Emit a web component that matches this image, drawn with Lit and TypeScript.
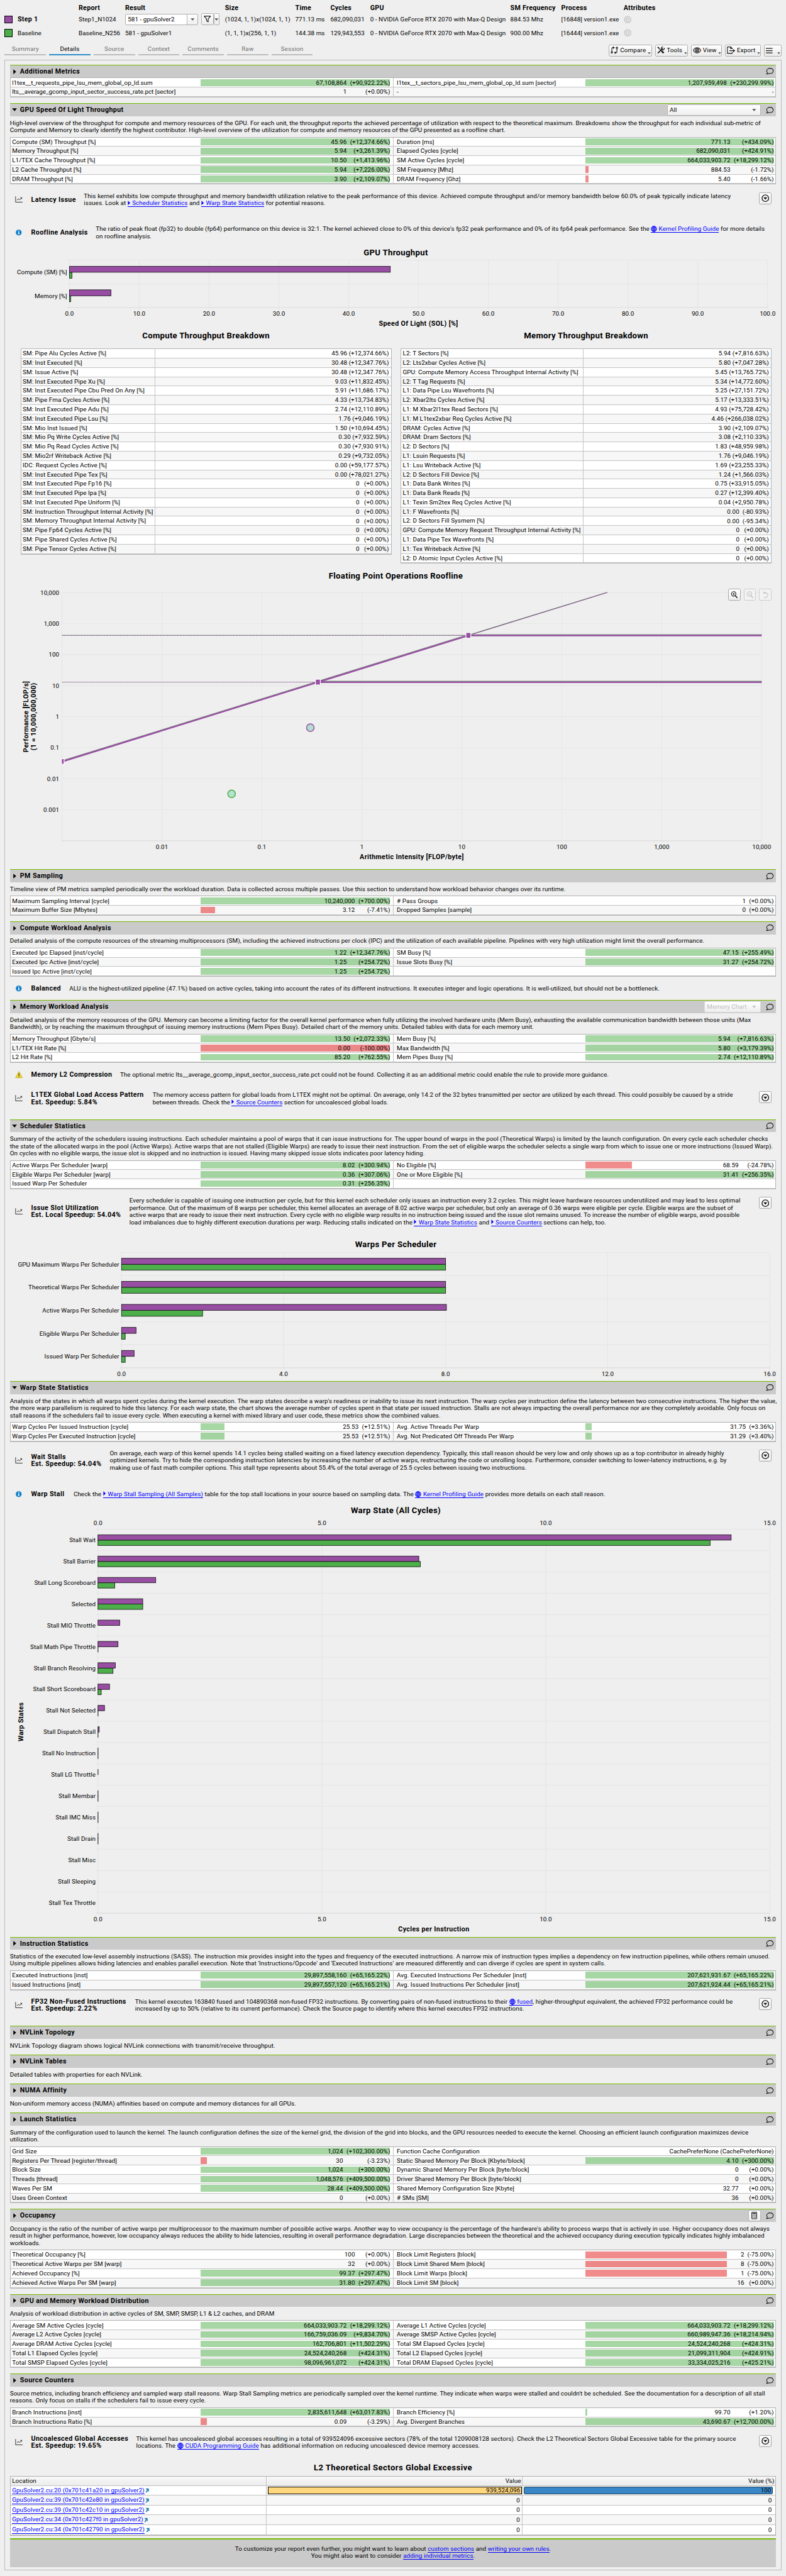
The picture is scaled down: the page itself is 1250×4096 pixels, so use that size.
import { LitElement, html, svg, css, nothing } from "lit";
import type { TemplateResult } from "lit";
import { customElement, property } from "lit/decorators.js";
import { classMap } from "lit/directives/class-map.js";

/** label, value, percentage; an empty label leaves the half of the row blank */
type Metric = [string, string, string];
type Row = [Metric, Metric];
type Line = [number, unknown];

const NONE: Metric = ["", "", ""];

const shared = css`
  * { box-sizing: border-box; }
  svg { display: block; overflow: visible; }
  a { color: #0000ff; text-decoration: none; border-bottom: 1px solid #0000ff; }
  .line { height: 14px; line-height: 14px; white-space: nowrap; text-align: justify; text-align-last: justify; }
`;

/* ---------- icons ---------- */
const tri = html`<svg class="tri" width="6" height="9" viewBox="0 0 6 9" style="display:inline-block"><path d="M0.5 0.3L5 4.5L0.5 8.7Z" fill="currentColor"/></svg>`;
const globe = html`<svg width="12" height="12" viewBox="0 0 12 12" style="display:inline-block;vertical-align:-2px" fill="none" stroke="#0000ff" stroke-width="1.1"><circle cx="6" cy="6" r="5.3"/><ellipse cx="6" cy="6" rx="2.5" ry="5.3"/><path d="M6 .5v11M.7 6h10.6M1.5 3.3h9M1.5 8.7h9"/></svg>`;
const bubble = html`<svg width="15" height="13" viewBox="0 0 15 13" fill="none" stroke="#1a1a1a" stroke-width="1.3" stroke-linejoin="round"><path d="M8 .8C4.3.8 1.6 2.9 1.6 5.8c0 1.3.5 2.4 1.4 3.3-.2 1-.8 1.9-1.8 2.7 1.6.1 3-.4 4-1.2.9.3 1.8.4 2.8.4 3.7 0 6.2-2.2 6.2-5.2S11.7.8 8 .8Z"/></svg>`;
const chartIcon = html`<svg width="15" height="13" viewBox="0 0 15 13" fill="none" stroke="#333" stroke-width="1.2"><path d="M1 .3v11.2h13.5"/><path d="M3.5 7.5l2.8-2.6 2.3 2.3 4-4.2M10 2.7h2.9v2.8"/></svg>`;
const infoIcon = html`<svg width="14" height="14" viewBox="0 0 14 14"><circle cx="7" cy="7" r="6.6" fill="#d4e4ef"/><circle cx="7" cy="7" r="5.5" fill="#0c7cc8"/><path d="M6.2 3h1.8v1.5H6.2zM5.4 5.5H8v3.7h.8v1H5.4v-1h.8V6.5h-.8z" fill="#fff"/></svg>`;
const warnIcon = html`<svg width="15" height="14" viewBox="0 0 15 14"><path d="M7.5.8L14.2 13H.8Z" fill="#f5dd2e" stroke="#b9a11a" stroke-width=".9" stroke-linejoin="round"/><path d="M7.5 4.5v4.5M7.5 10v1.5" stroke="#222" stroke-width="1.5"/></svg>`;
const expandIcon = html`<svg width="15" height="15" viewBox="0 0 15 15"><circle cx="7.5" cy="7.5" r="6.4" fill="none" stroke="#111" stroke-width="1.6"/><path d="M3.8 5.7h7.4L7.5 10.4Z" fill="#111"/></svg>`;
const chip = html`<svg width="15" height="15" viewBox="0 0 15 15" fill="none" stroke="#c4c4c4" stroke-width="1.3"><rect x="2.7" y="2.7" width="9.6" height="9.6" rx="1"/><rect x="5.5" y="5.5" width="4" height="4"/><path d="M5 .3v2.4M7.5.3v2.4M10 .3v2.4M5 12.3v2.4M7.5 12.3v2.4M10 12.3v2.4M.3 5h2.4M.3 7.5h2.4M.3 10h2.4M12.3 5h2.4M12.3 7.5h2.4M12.3 10h2.4"/></svg>`;
const funnel = html`<svg width="14" height="13" viewBox="0 0 14 13" fill="none" stroke="#1a1a1a" stroke-width="1.4" stroke-linejoin="round"><path d="M.8.8h12.4L8.6 6.3v5.5L5.4 9.5V6.3Z"/></svg>`;
const caret = (c = "#555") => html`<svg width="8" height="5" viewBox="0 0 8 5"><path d="M.3.3h7.4L4 4.6Z" fill=${c}/></svg>`;
const compareIcon = html`<svg width="15" height="14" viewBox="0 0 15 14" fill="none" stroke="#1a1a1a" stroke-width="1.4"><path d="M6.8 2H4.5C3 2 2.5 2.8 2.5 4v5.5M4.8.2l2.2 1.8-2.2 1.9"/><circle cx="2.5" cy="11.3" r="1.5"/><path d="M7.8 12h2.3c1.5 0 2.2-.8 2.2-2V4.5M9.9 10.1L7.8 12l2.1 1.8"/><circle cx="12.3" cy="2.6" r="1.5"/></svg>`;
const toolsIcon = html`<svg width="15" height="14" viewBox="0 0 15 14" fill="none" stroke="#1a1a1a"><path d="M3.8 3.8L9 9" stroke-width="1.5"/><path d="M8.8 8.8l4 3.7" stroke-width="3.3"/><path d="M1 .8L4 3.6" stroke-width="2.3"/><path d="M1.3 13L11 3.6" stroke-width="2.2"/><path d="M13.8 2.5a3 3 0 1 1-2.2-1.8" stroke-width="1.5"/></svg>`;
const eyeIcon = html`<svg width="16" height="12" viewBox="0 0 16 12" fill="none" stroke="#1a1a1a" stroke-width="1.3"><path d="M.8 6C2.5 2.7 5 .9 8 .9S13.5 2.7 15.2 6C13.5 9.3 11 11.1 8 11.1S2.5 9.3.8 6Z"/><circle cx="8" cy="6" r="3.4"/><circle cx="8" cy="6" r="1.5"/></svg>`;
const exportIcon = html`<svg width="16" height="14" viewBox="0 0 16 14" fill="none" stroke="#1a1a1a" stroke-width="1.4"><path d="M10.3 5V3.5L7.5.8H1v12.4h9.3V11"/><path d="M7 .8v3h3.3M5 8h9.8M12 5.3L14.9 8 12 10.7"/></svg>`;
const menuIcon = html`<svg width="13" height="11" viewBox="0 0 13 11"><path d="M0 1h13M0 5.5h13M0 10h13" stroke="#1a1a1a" stroke-width="1.5"/></svg>`;
const calcIcon = html`<svg width="11" height="14" viewBox="0 0 11 14"><rect x=".7" y=".7" width="9.6" height="12.6" rx="1" fill="#fff" stroke="#222" stroke-width="1.3"/><path d="M2 3.2h7" stroke="#222" stroke-width="2.2"/><path d="M2.2 6.5h6.8M2.2 8.8h6.8M2.2 11.1h6.8" stroke="#222" stroke-width="1.4" stroke-dasharray="1.5 1.1"/></svg>`;
const openIcon = html`<svg width="8" height="9" viewBox="0 0 8 9" style="display:inline-block;margin-left:2px"><path d="M.5 1H7v6.5L5.4 5.9 2.3 9 .5 8.5 3.4 4.4Z" fill="#2d7fb8"/></svg>`;
const zoomGlyph = (c: string, plus: boolean) => html`<svg width="14" height="14" viewBox="0 0 14 14" fill="none" stroke=${c}><circle cx="5.8" cy="5.3" r="4.3" stroke-width="1.3"/><path d="M3.8 5.3h4${plus ? "M5.8 3.3v4" : ""}" stroke-width="1.2"/><path d="M8.8 8.5l4 4.5" stroke-width="1.9"/></svg>`;
const resetGlyph = html`<svg width="14" height="14" viewBox="0 0 14 14" fill="none" stroke="#c2c2c2" stroke-width="1.4"><path d="M3.5 11.5c4 1.8 7.5-.5 7.5-4.3S7.5 1.7 3.5 3.5M3.3.8v3.5h3.8"/></svg>`;

const link = (text: string) => html`<a>${tri} ${text}</a>`;
const web = (text: string) => html`<a>${globe} ${text}</a>`;

/* ---------- metric table ---------- */
@customElement("metric-table")
class MetricTable extends LitElement {
  @property({ attribute: false }) rows: Row[] = [];
  @property({ attribute: false }) pct: [number, number] = [84, 84];

  static styles = [shared, css`
    :host { display: block; border: 1px solid #b6b6b6; border-top-color: #b0b0b0; background: #fff; }
    .row { display: grid; grid-template-columns: 741px 1fr; height: 18px; border-bottom: 1px solid #c4c4c4; }
    .row:nth-child(even) { background: #f7f7f7; }
    .half { display: grid; grid-template-columns: 368px 366px 1fr; align-items: center; height: 100%; }
    .left { border-right: 1px solid #c4c4c4; }
    .right { grid-template-columns: 370.5px 364.5px 1fr; }
    .name { padding-left: 3px; white-space: nowrap; line-height: 14px; }
    .counter { letter-spacing: -0.03px; }
    .right .name { padding-left: 6px; }
    .track { display: grid; align-items: center; }
    .bar, .nums { grid-area: 1 / 1; }
    .bar { height: 13px; background: rgba(77, 175, 74, 0.5); }
    .neg { background: rgba(228, 26, 28, 0.5); }
    .nums { display: flex; justify-content: flex-end; line-height: 14px; white-space: nowrap; }
    .p { text-align: right; }
  `];

  private half(m: Metric, side: 0 | 1) {
    const [name, value, pct] = m;
    const n = parseFloat(pct.replace(/[(),%]/g, ""));
    const w = isNaN(n) ? 0 : Math.min(100, Math.abs(n));
    return html`<div class=${classMap({ half: true, left: side === 0, right: side === 1 })}>
      <div class=${classMap({ name: true, counter: name.includes("__") })}>${name}</div>
      <div class="track">
        ${w > 0 ? html`<div class=${classMap({ bar: true, neg: n < 0 })} style="width:${w}%"></div>` : nothing}
        <div class="nums"><span>${value}</span>${pct ? html`<span class="p" style="width:${this.pct[side]}px">${pct}</span>` : nothing}</div>
      </div>
    </div>`;
  }

  render() {
    return this.rows.map((r) => html`<div class="row">${this.half(r[0], 0)}${this.half(r[1], 1)}</div>`);
  }
}

/* ---------- section header ---------- */
@customElement("section-bar")
class SectionBar extends LitElement {
  @property() name = "";
  @property({ type: Boolean }) open = false;

  static styles = [shared, css`
    :host { display: flex; align-items: center; height: 25px; border-top: 2px solid #76b900; background: #cacaca; padding: 0 5px 0 6px; }
    .mark { width: 13.5px; }
    .name { font-weight: 700; font-size: 13px; letter-spacing: 0.48px; flex: 1; }
    .extra { display: flex; margin-right: 10px; }
  `];

  render() {
    return html`<div class="mark">${this.open
        ? html`<svg width="10" height="6" viewBox="0 0 10 6" style="margin-left:-2px"><path d="M.3.3h9.4L5 5.7Z"/></svg>`
        : html`<svg width="6" height="10" viewBox="0 0 6 10"><path d="M.3.3v9.4L5.7 5Z"/></svg>`}</div>
      <div class="name">${this.name}</div>
      <div class="extra"><slot></slot></div>${bubble}`;
  }
}

/* ---------- rule result ---------- */
@customElement("rule-note")
class RuleNote extends LitElement {
  @property() kind: "chart" | "info" | "warn" = "chart";
  @property({ attribute: false }) labels: string[] = [];
  @property({ type: Number }) labelWidth = 100;
  @property({ type: Number }) h = 64;
  @property({ attribute: false }) lines: Line[] = [];

  static styles = [shared, css`
    :host { display: block; }
    .note { display: flex; align-items: flex-start; padding: 10px 9px 0 10px; }
    .single { padding-top: 11px; }
    .body { display: flex; align-items: center; flex: 1; }
    .icon { width: 31px; }
    .label { font-weight: 700; font-size: 13px; letter-spacing: 0.47px; line-height: 14px; white-space: nowrap; }
    .btn { width: 24px; height: 23px; display: grid; place-items: center; border: 1px solid #a8a8a8; border-radius: 3px; background: linear-gradient(#fff, #f0f0f0); }
  `];

  render() {
    const icon = this.kind === "chart" ? chartIcon : this.kind === "info" ? infoIcon : warnIcon;
    return html`<div class=${classMap({ note: true, single: this.lines.length === 1 })} style="height:${this.h}px">
      <div class="body">
        <div class="icon">${icon}</div>
        <div class="label" style="width:${this.labelWidth}px">${this.labels.map((l) => html`<div>${l}</div>`)}</div>
        <div>${this.lines.map(([w, t]) => html`<div class="line" style="width:${w}px">${t}</div>`)}</div>
      </div>
      ${this.kind === "chart" ? html`<div class="btn">${expandIcon}</div>` : nothing}
    </div>`;
  }
}

/* ---------- charts ---------- */
interface BarChart {
  y0: number; h: number; title: string; titleY: number;
  left: number; right: number; top: number; bottom: number;
  max: number; ticks: string[]; tickY: number[];
  off: number; bar: number;
  data: [string, number, number][];
  xTitle?: [string, number]; yTitle?: [string, number, number];
}

const PURPLE = "#984ea3";
const GREEN = "#4daf4a";

function barChart(c: BarChart): TemplateResult {
  const step = (c.bottom - c.top) / c.data.length;
  const sx = (v: number) => (v / c.max) * (c.right - c.left);
  const n = c.ticks.length - 1;
  return html`<svg class="chart" width="1482" height=${c.h} viewBox="19 ${c.y0} 1482 ${c.h}">
    <text class="title" x="765" y=${c.titleY + 5.5}>${c.title}</text>
    ${c.ticks.map((t, i) => {
      const x = c.left + ((c.right - c.left) * i) / n;
      return svg`<path d="M${x} ${c.tickY.length > 1 ? c.top - 4 : c.top}V${c.bottom + 4}" stroke="#e3e3e3"/>
        ${c.tickY.map((y) => svg`<text class="mid" x=${x} y=${y + 4.3}>${t}</text>`)}`;
    })}
    ${c.data.map((_, i) => svg`<path d="M${c.left - 4} ${c.top + step * i}H${c.right}" stroke="#e3e3e3"/>`)}
    <path d="M${c.left - 4} ${c.bottom}H${c.right}" stroke="#dcdcdc" stroke-width="1.5"/>
    ${c.data.map(([name, a, b], i) => {
      const y = c.top + step * i;
      return svg`<text class="end" x=${c.left - 4.5} y=${y + step / 2 + 4.3}>${name}</text>
        ${b > 0 ? svg`<rect x=${c.left} y=${y + c.off + c.bar} width=${sx(b)} height=${c.bar} fill=${GREEN} stroke="#111"/>` : nothing}
        ${a > 0 ? svg`<rect x=${c.left} y=${y + c.off} width=${sx(a)} height=${c.bar} fill=${PURPLE} stroke="#111"/>` : nothing}`;
    })}
    ${c.xTitle ? svg`<text class="axis" x=${(c.left + c.right) / 2} y=${c.xTitle[1] + 4.6}>${c.xTitle[0]}</text>` : nothing}
    ${c.yTitle ? svg`<text class="axis" transform="translate(${c.yTitle[1] + 4.5} ${c.yTitle[2]}) rotate(-90)">${c.yTitle[0]}</text>` : nothing}
  </svg>`;
}

function roofline(): TemplateResult {
  const L = 119.5, R = 1472.5, T = 1145, B = 1625;
  const xs = ["", "0.01", "0.1", "1", "10", "100", "1,000", "10,000"];
  const ys = ["10,000", "1,000", "100", "10", "1", "0.1", "0.01", "0.001"];
  return html`<svg class="chart" width="1482" height="580" viewBox="19 1089 1482 580">
    <text class="title" x="765" y="1118.5">Floating Point Operations Roofline</text>
    ${ys.map((t, i) => svg`<path d="M${L} ${T + 60 * i}H${R}" stroke="#e4e4e4"/><text class="end" x="114" y=${T + 60 * i + 4.3}>${t}</text>`)}
    ${xs.map((t, i) => {
      const x = L + ((R - L) * i) / 7;
      return svg`<path d="M${x} ${T}V${B + 4}" stroke="#e4e4e4"/><text class="mid" x=${x} y="1641">${t}</text>`;
    })}
    <path d="M${L} ${B}H${R}" stroke="#dcdcdc" stroke-width="1.5"/>
    <path d="M${L} 1227.4H905" stroke="#6b8f6b" stroke-dasharray="2 1"/>
    <path d="M${L} 1228.2H905M${L} 1318.4H614" stroke="#6f3f78" stroke-width="1.1" stroke-dasharray="2 1"/>
    <path d="M905 1227.8L1174 1144.6" stroke="#5d9a5b" stroke-width="1.5"/>
    <path d="M905 1228.3L1174 1145.2" stroke=${PURPLE} stroke-width="1.2"/>
    <path d="M${L} 1471L905 1227H${R}M614 1317.2H${R}" fill="none" stroke="#7fa97f" stroke-width="2.6"/>
    <path d="M${L} 1472L905 1228.2H${R}M614 1318.5H${R}" fill="none" stroke=${PURPLE} stroke-width="3"/>
    <rect x="900.5" y="1222.5" width="9.5" height="11" fill=${PURPLE} stroke="#fff" stroke-width="1.5"/>
    <rect x="609.5" y="1312.8" width="9.5" height="11" fill=${PURPLE} stroke="#fff" stroke-width="1.5"/>
    <path d="M119.5 1466.5h4v10.5h-4" fill=${PURPLE} stroke="#fff" stroke-width="1.5"/>
    <circle cx="599.7" cy="1406.4" r="7.3" fill="#b3dfd0" stroke=${PURPLE} stroke-width="1.8"/>
    <circle cx="447.4" cy="1534.4" r="7.3" fill="#b3e2cd" stroke=${GREEN} stroke-width="1.8"/>
    <text class="axis" x="796" y="1660.6">Arithmetic Intensity [FLOP/byte]</text>
    <text class="axis" transform="translate(54.5 1385) rotate(-90)">Performance [FLOP/s]</text>
    <text class="axis" transform="translate(68.5 1385) rotate(-90)">(1 = 10,000,000,000)</text>
  </svg>`;
}

/* ---------- data ---------- */
const sm: [string, string][] = [
  ["SM: Pipe Alu Cycles Active [%]", "45.96 (+12,374.66%)"], ["SM: Inst Executed [%]", "30.48 (+12,347.76%)"],
  ["SM: Issue Active [%]", "30.48 (+12,347.76%)"], ["SM: Inst Executed Pipe Xu [%]", "9.03 (+11,832.45%)"],
  ["SM: Inst Executed Pipe Cbu Pred On Any [%]", "5.91 (+11,686.17%)"], ["SM: Pipe Fma Cycles Active [%]", "4.33 (+13,734.83%)"],
  ["SM: Inst Executed Pipe Adu [%]", "2.74 (+12,110.89%)"], ["SM: Inst Executed Pipe Lsu [%]", "1.76 (+9,046.19%)"],
  ["SM: Mio Inst Issued [%]", "1.50 (+10,694.45%)"], ["SM: Mio Pq Write Cycles Active [%]", "0.30 (+7,932.59%)"],
  ["SM: Mio Pq Read Cycles Active [%]", "0.30 (+7,930.91%)"], ["SM: Mio2rf Writeback Active [%]", "0.29 (+9,732.05%)"],
  ["IDC: Request Cycles Active [%]", "0.00 (+59,177.57%)"], ["SM: Inst Executed Pipe Tex [%]", "0.00 (+78,021.27%)"],
  ["SM: Inst Executed Pipe Fp16 [%]", "0\u00a0\u00a0 (+0.00%)"], ["SM: Inst Executed Pipe Ipa [%]", "0\u00a0\u00a0 (+0.00%)"],
  ["SM: Inst Executed Pipe Uniform [%]", "0\u00a0\u00a0 (+0.00%)"], ["SM: Instruction Throughput Internal Activity [%]", "0\u00a0\u00a0 (+0.00%)"],
  ["SM: Memory Throughput Internal Activity [%]", "0\u00a0\u00a0 (+0.00%)"], ["SM: Pipe Fp64 Cycles Active [%]", "0\u00a0\u00a0 (+0.00%)"],
  ["SM: Pipe Shared Cycles Active [%]", "0\u00a0\u00a0 (+0.00%)"], ["SM: Pipe Tensor Cycles Active [%]", "0\u00a0\u00a0 (+0.00%)"],
];
const mem: [string, string][] = [
  ["L2: T Sectors [%]", "5.94 (+7,816.63%)"], ["L2: Lts2xbar Cycles Active [%]", "5.80 (+7,047.28%)"],
  ["GPU: Compute Memory Access Throughput Internal Activity [%]", "5.45 (+13,765.72%)"], ["L2: T Tag Requests [%]", "5.34 (+14,772.60%)"],
  ["L1: Data Pipe Lsu Wavefronts [%]", "5.25 (+27,151.72%)"], ["L2: Xbar2lts Cycles Active [%]", "5.17 (+13,333.51%)"],
  ["L1: M Xbar2l1tex Read Sectors [%]", "4.93 (+75,728.42%)"], ["L1: M L1tex2xbar Req Cycles Active [%]", "4.46 (+266,038.02%)"],
  ["DRAM: Cycles Active [%]", "3.90 (+2,109.07%)"], ["DRAM: Dram Sectors [%]", "3.08 (+2,110.33%)"],
  ["L2: D Sectors [%]", "1.83 (+48,959.98%)"], ["L1: Lsuin Requests [%]", "1.76 (+9,046.19%)"],
  ["L1: Lsu Writeback Active [%]", "1.69 (+23,255.33%)"], ["L2: D Sectors Fill Device [%]", "1.24 (+1,566.03%)"],
  ["L1: Data Bank Writes [%]", "0.75 (+33,915.05%)"], ["L1: Data Bank Reads [%]", "0.27 (+12,399.40%)"],
  ["L1: Texin Sm2tex Req Cycles Active [%]", "0.04 (+2,950.78%)"], ["L1: F Wavefronts [%]", "0.00\u00a0 (-80.93%)"],
  ["L2: D Sectors Fill Sysmem [%]", "0.00\u00a0 (-95.34%)"], ["GPU: Compute Memory Request Throughput Internal Activity [%]", "0\u00a0\u00a0 (+0.00%)"],
  ["L1: Data Pipe Tex Wavefronts [%]", "0\u00a0\u00a0 (+0.00%)"], ["L1: Tex Writeback Active [%]", "0\u00a0\u00a0 (+0.00%)"],
  ["L2: D Atomic Input Cycles Active [%]", "0\u00a0\u00a0 (+0.00%)"],
];

const sources = ["20 (0x701c41a20", "39 (0x701c42e80", "39 (0x701c42c10", "34 (0x701c427f0", "34 (0x701c42790"];

const desc = (lines: Line[], tail = true) => html`<div class=${classMap({ desc: true, tail })}>
  ${lines.map(([w, t]) => html`<div class="line" style="width:${w}px">${t}</div>`)}</div>`;

const breakdown = (title: string, cls: string, rows: [string, string][]) => html`<div class="bd ${cls}">
  <h4>${title}</h4>
  <div class="bdt">${rows.map(([a, b]) => html`<div class="bdr"><span class="bdn">${a}</span><span class="bdv">${b}</span></div>`)}</div>
</div>`;

@customElement("app-root")
class AppRoot extends LitElement {
  static styles = [shared, css`
    :host { display: block; width: 1250px; height: 4096px; overflow: hidden; background: #efefef; }
    .page { zoom: 0.82237; width: 1520px; height: 4981px; font: 12px/14px Roboto, "Liberation Sans", sans-serif; letter-spacing: 0.07px; color: #000; padding: 7px 9px 0; background: #efefef; }
    .top { display: grid; grid-template-columns: 25px 118px 90px 193px 136px 68px 77px 271px 98.5px 120.5px 1fr; grid-template-rows: 18px 25px 28px; align-items: center; white-space: nowrap; height: 71px; }
    .top b { font-weight: 700; font-size: 13px; letter-spacing: 0.35px; }
    .sw { width: 15px; height: 15px; border: 1px solid #000; }
    .p { background: #984ea3; } .g { background: #4daf4a; }
    .result { display: flex; align-items: center; }
    .sel { display: flex; align-items: center; width: 141px; height: 22px; border: 1px solid #adadad; border-radius: 2px; background: #fff; padding-left: 4px; }
    .sel span { flex: 1; }
    .sel i { display: grid; place-items: center; width: 20px; height: 100%; border-left: 1px solid #b4b4b4; background: linear-gradient(#fff, #eee); }
    .fb { display: grid; place-items: center; height: 23px; border: 1px solid #adadad; border-radius: 3px; background: linear-gradient(#fff, #ebebeb); }
    .f1 { width: 24px; margin-left: 6px; } .f2 { width: 12px; }
    .bar { display: flex; justify-content: space-between; height: 37px; }
    .tabs { display: flex; gap: 6px; padding-top: 9px; }
    .tab { width: 80px; height: 20px; text-align: center; color: #6f6f6f; border-bottom: 3px solid #bdbdbd; letter-spacing: 0.18px; }
    .on { color: #000; border-color: #2d8dc8; }
    .tools { display: flex; gap: 6px; padding-top: 8px; }
    .tb { display: flex; align-items: center; gap: 3px; height: 23px; padding-left: 3px; border: 1px solid #adadad; border-radius: 3px; background: linear-gradient(#fff, #ebebeb); letter-spacing: 0.16px; }
    .tb span { flex: 1; }
    .tb i { align-self: flex-end; padding: 0 1px 3px 0; }
    .tb i svg { width: 6px; height: 4px; }
    .panel { border: 1px solid #b8b8b8; height: 4855px; padding: 9px 9px 0; }
    section { margin-bottom: 11px; }
    section.flush { margin-bottom: 0; }
    .desc { padding-top: 6px; }
    .tail { padding-bottom: 6px; }
    .rules { padding-top: 5px; }
    .chart text { font: 12px Roboto, sans-serif; fill: #000; }
    .chart .mid, .chart .title, .chart .axis { text-anchor: middle; }
    .chart .end { text-anchor: end; }
    .chart .title { font-weight: 700; font-size: 16px; letter-spacing: 0.38px; }
    .chart .axis { font-weight: 700; font-size: 13px; letter-spacing: 0.45px; }
    .bds { display: flex; gap: 17.5px; padding: 0 9.5px 0 20.5px; }
    h4 { margin: 0; font-size: 16px; line-height: 18px; font-weight: 700; letter-spacing: 0.34px; text-align: center; height: 33px; }
    .bd { width: 717.5px; flex: none; }
    .bdt { border: 1px solid #b6b6b6; background: #fff; }
    .bdr { display: flex; height: 18px; align-items: center; border-bottom: 1px solid #c4c4c4; white-space: nowrap; }
    .bdr:nth-child(even) { background: #f7f7f7; }
    .bdn { width: 260px; height: 100%; padding-left: 3px; border-right: 1px solid #c4c4c4; line-height: 17px; }
    .memory .bdn { width: 352.5px; }
    .bdv { flex: 1; text-align: right; padding-right: 4px; }
    .roof { display: grid; }
    .roof > * { grid-area: 1 / 1; }
    .zooms { display: flex; gap: 6px; justify-self: end; padding: 48px 9px 0 0; height: 71px; }
    .zb { width: 24px; height: 23px; display: grid; place-items: center; border: 1px solid #a8a8a8; border-radius: 3px; background: linear-gradient(#fff, #ededed); }
    .off { border-color: #cdcdcd; background: #f2f2f2; }
    .combo { display: flex; align-items: center; justify-content: space-between; height: 21px; width: 181px; padding: 0 7px 0 4px; border: 1px solid #b4b4b4; border-radius: 2px; background: linear-gradient(#fff, #eee); }
    .dis { width: 109px; color: #bdbdbd; border-color: #d8d8d8; }
    .calc { width: 24px; height: 22px; display: grid; place-items: center; border: 1px solid #b4b4b4; border-radius: 3px; background: linear-gradient(#fff, #eee); }
    .l2 { height: 25px; text-align: center; font-weight: 700; font-size: 16px; letter-spacing: 0.5px; line-height: 19px; }
    .lt { border: 1px solid #b0b0b0; background: #fff; margin-bottom: 5px; }
    .lr { display: grid; grid-template-columns: 494px 495px 1fr; height: 19px; border-bottom: 1px solid #c4c4c4; white-space: nowrap; }
    .lr > div { display: flex; align-items: center; padding: 0 4px 0 3px; }
    .lr > div + div { border-left: 1px solid #c4c4c4; justify-content: flex-end; }
    .lr > div:last-child { padding-right: 7px; }
    .lr:nth-child(odd) { background: #f7f7f7; }
    .lr.head { height: 18px; background: linear-gradient(#f8f8f8, #ececec); }
    .lr.head > div { padding-right: 2px; }
    .lr .hot { padding: 2px 0 1.5px 2px; }
    .lr .hot:last-child { padding-right: 5px; }
    .fill { flex: 1; height: 14.5px; border: 1px solid #000; background: #ffd77f; text-align: right; line-height: 13px; padding-right: 2px; }
    .blue { background: #3a87c8; border-color: #24405a; border-radius: 2px; }
    footer { height: 56px; border-top: 3px solid #76b900; background: #cacaca; padding-top: 11px; display: flex; flex-direction: column; align-items: center; }
  `];

  render() {
    return html`<div class="page">
      <div class="top">
        <span></span><span></span><b>Report</b><b>Result</b><b>Size</b><b>Time</b><b>Cycles</b><b>GPU</b><b>SM Frequency</b><b>Process</b><b>Attributes</b>
        <div class="sw p"></div><b>Step 1</b><span>Step1_N1024</span>
        <div class="result"><div class="sel"><span>581 - gpuSolver2</span><i>${caret()}</i></div><div class="fb f1">${funnel}</div><div class="fb f2">${caret()}</div></div>
        <span>(1024, 1, 1)x(1024, 1, 1)</span><span>771.13 ms</span><span>682,090,031</span><span>0 - NVIDIA GeForce RTX 2070 with Max-Q Design</span><span>884.53 Mhz</span><span>[16848] version1.exe</span><span>${chip}</span>
        <div class="sw g"></div><span>Baseline</span><span>Baseline_N256</span><span>581 - gpuSolver1</span>
        <span>(1, 1, 1)x(256, 1, 1)</span><span>144.38 ms</span><span>129,943,553</span><span>0 - NVIDIA GeForce RTX 2070 with Max-Q Design</span><span>900.00 Mhz</span><span>[16444] version1.exe</span><span>${chip}</span>
      </div>
      <div class="bar">
        <div class="tabs">${["Summary", "Details", "Source", "Context", "Comments", "Raw", "Session"].map((t) => html`<div class=${classMap({ tab: true, on: t === "Details" })}>${t}</div>`)}</div>
        <div class="tools">
          <div class="tb" style="width:84px">${compareIcon}<span>Compare</span><i>${caret()}</i></div>
          <div class="tb" style="width:63px">${toolsIcon}<span>Tools</span><i>${caret()}</i></div>
          <div class="tb" style="width:60px">${eyeIcon}<span>View</span><i>${caret()}</i></div>
          <div class="tb" style="width:69px">${exportIcon}<span>Export</span><i>${caret()}</i></div>
          <div class="tb" style="width:34px">${menuIcon}<span></span><i>${caret()}</i></div>
        </div>
      </div>
      <div class="panel">${this.sections()}</div>
    </div>`;
  }

  private sections() {
    return html`
      <section><section-bar name="Additional Metrics"></section-bar>
        <metric-table .pct=${[84, 91]} .rows=${[
          [["l1tex__t_requests_pipe_lsu_mem_global_op_ld.sum", "67,108,864", "(+90,922.22%)"], ["l1tex__t_sectors_pipe_lsu_mem_global_op_ld.sum [sector]", "1,207,959,498", "(+230,299.99%)"]],
          [["lts__average_gcomp_input_sector_success_rate.pct [sector]", "1", "(+0.00%)"], ["-", "-", ""]],
        ]}></metric-table></section>

      <section><section-bar name="GPU Speed Of Light Throughput" open><div class="combo">All${caret()}</div></section-bar>
        ${desc([[1452, "High-level overview of the throughput for compute and memory resources of the GPU. For each unit, the throughput reports the achieved percentage of utilization with respect to the theoretical maximum. Breakdowns show the throughput for each individual sub-metric of"],
          [958, "Compute and Memory to clearly identify the highest contributor. High-level overview of the utilization for compute and memory resources of the GPU presented as a roofline chart."]])}
        <metric-table .rows=${[
          [["Compute (SM) Throughput [%]", "45.96", "(+12,374.66%)"], ["Duration [ms]", "771.13", "(+434.09%)"]],
          [["Memory Throughput [%]", "5.94", "(+3,261.39%)"], ["Elapsed Cycles [cycle]", "682,090,031", "(+424.91%)"]],
          [["L1/TEX Cache Throughput [%]", "10.50", "(+1,413.96%)"], ["SM Active Cycles [cycle]", "664,033,903.72", "(+18,299.12%)"]],
          [["L2 Cache Throughput [%]", "5.94", "(+7,226.00%)"], ["SM Frequency [Mhz]", "884.53", "(-1.72%)"]],
          [["DRAM Throughput [%]", "3.90", "(+2,109.07%)"], ["DRAM Frequency [Ghz]", "5.40", "(-1.66%)"]],
        ]}></metric-table>
        <div class="rules">
          <rule-note .labels=${["Latency Issue"]} labelWidth="102" h="64" .lines=${[
            [1251, "This kernel exhibits low compute throughput and memory bandwidth utilization relative to the peak performance of this device. Achieved compute throughput and/or memory bandwidth below 60.0% of peak typically indicate latency"],
            [465, html`issues. Look at ${link("Scheduler Statistics")} and ${link("Warp State Statistics")} for potential reasons.`]]}></rule-note>
          <rule-note kind="info" .labels=${["Roofline Analysis"]} labelWidth="125" h="54" .lines=${[
            [1290, html`The ratio of peak float (fp32) to double (fp64) performance on this device is 32:1. The kernel achieved close to 0% of this device's fp32 peak performance and 0% of its fp64 peak performance. See the ${web("Kernel Profiling Guide")} for more details`],
            [108, "on roofline analysis."]]}></rule-note>
        </div>
        ${barChart({ y0: 479, h: 161, title: "GPU Throughput", titleY: 486.5, left: 133.8, right: 1484, top: 502, bottom: 593, max: 100,
          ticks: ["0.0", "10.0", "20.0", "30.0", "40.0", "50.0", "60.0", "70.0", "80.0", "90.0", "100.0"], tickY: [604.6], off: 11.6, bar: 11.5,
          data: [["Compute (SM) [%]", 45.96, 0.37], ["Memory [%]", 5.94, 0.18]], xTitle: ["Speed Of Light (SOL) [%]", 624] })}
        <div class="bds">${breakdown("Compute Throughput Breakdown", "compute", sm)}${breakdown("Memory Throughput Breakdown", "memory", mem)}</div>
        <div class="roof">${roofline()}<div class="zooms"><div class="zb">${zoomGlyph("#1a1a1a", true)}</div><div class="zb off">${zoomGlyph("#c2c2c2", false)}</div><div class="zb off">${resetGlyph}</div></div></div>
      </section>

      <section><section-bar name="PM Sampling"></section-bar>
        ${desc([[1073, "Timeline view of PM metrics sampled periodically over the workload duration. Data is collected across multiple passes. Use this section to understand how workload behavior changes over its runtime."]])}
        <metric-table .pct=${[68, 54]} .rows=${[
          [["Maximum Sampling Interval [cycle]", "10,240,000", "(+700.00%)"], ["# Pass Groups", "1", "(+0.00%)"]],
          [["Maximum Buffer Size [Mbytes]", "3.12", "(-7.41%)"], ["Dropped Samples [sample]", "0", "(+0.00%)"]],
        ]}></metric-table></section>

      <section class="flush"><section-bar name="Compute Workload Analysis"></section-bar>
        ${desc([[1343, "Detailed analysis of the compute resources of the streaming multiprocessors (SM), including the achieved instructions per clock (IPC) and the utilization of each available pipeline. Pipelines with very high utilization might limit the overall performance."]])}
        <metric-table .pct=${[84, 68]} .rows=${[
          [["Executed Ipc Elapsed [inst/cycle]", "1.22", "(+12,347.76%)"], ["SM Busy [%]", "47.15", "(+255.49%)"]],
          [["Executed Ipc Active [inst/cycle]", "1.25", "(+254.72%)"], ["Issue Slots Busy [%]", "31.27", "(+254.72%)"]],
          [["Issued Ipc Active [inst/cycle]", "1.25", "(+254.72%)"], NONE],
        ]}></metric-table>
        <div class="rules"><rule-note kind="info" .labels=${["Balanced"]} labelWidth="74" h="40" .lines=${[
          [1136, "ALU is the highest-utilized pipeline (47.1%) based on active cycles, taking into account the rates of its different instructions. It executes integer and logic operations. It is well-utilized, but should not be a bottleneck."]]}></rule-note></div></section>

      <section class="flush"><section-bar name="Memory Workload Analysis"><div class="combo dis">Memory Chart${caret("#bdbdbd")}</div></section-bar>
        ${desc([[1433, "Detailed analysis of the memory resources of the GPU. Memory can become a limiting factor for the overall kernel performance when fully utilizing the involved hardware units (Mem Busy), exhausting the available communication bandwidth between those units (Max"],
          [1013, "Bandwidth), or by reaching the maximum throughput of issuing memory instructions (Mem Pipes Busy). Detailed chart of the memory units. Detailed tables with data for each memory unit."]])}
        <metric-table .pct=${[77, 84]} .rows=${[
          [["Memory Throughput [Gbyte/s]", "13.50", "(+2,072.33%)"], ["Mem Busy [%]", "5.94", "(+7,816.63%)"]],
          [["L1/TEX Hit Rate [%]", "0.00", "(-100.00%)"], ["Max Bandwidth [%]", "5.80", "(+3,179.39%)"]],
          [["L2 Hit Rate [%]", "85.20", "(+762.55%)"], ["Mem Pipes Busy [%]", "2.74", "(+12,110.89%)"]],
        ]}></metric-table>
        <div class="rules">
          <rule-note kind="warn" .labels=${["Memory L2 Compression"]} labelWidth="172" h="40" .lines=${[
            [943, "The optional metric lts__average_gcomp_input_sector_success_rate.pct could not be found. Collecting it as an additional metric could enable the rule to provide more guidance."]]}></rule-note>
          <rule-note .labels=${["L1TEX Global Load Access Pattern", "Est. Speedup: 5.84%"]} labelWidth="235" h="64" .lines=${[
            [1122, "The memory access pattern for global loads from L1TEX might not be optimal. On average, only 14.2 of the 32 bytes transmitted per sector are utilized by each thread. This could possibly be caused by a stride"],
            [453, html`between threads. Check the ${link("Source Counters")} section for uncoalesced global loads.`]]}></rule-note>
        </div></section>

      <section class="flush"><section-bar name="Scheduler Statistics" open></section-bar>
        ${desc([[1466, "Summary of the activity of the schedulers issuing instructions. Each scheduler maintains a pool of warps that it can issue instructions for. The upper bound of warps in the pool (Theoretical Warps) is limited by the launch configuration. On every cycle each scheduler checks"],
          [1471, "the state of the allocated warps in the pool (Active Warps). Active warps that are not stalled (Eligible Warps) are ready to issue their next instruction. From the set of eligible warps the scheduler selects a single warp from which to issue one or more instructions (Issued Warp)."],
          [802, "On cycles with no eligible warps, the issue slot is skipped and no instruction is issued. Having many skipped issue slots indicates poor latency hiding."]])}
        <metric-table .pct=${[68, 68]} .rows=${[
          [["Active Warps Per Scheduler [warp]", "8.02", "(+300.94%)"], ["No Eligible [%]", "68.59", "(-24.78%)"]],
          [["Eligible Warps Per Scheduler [warp]", "0.36", "(+307.06%)"], ["One or More Eligible [%]", "31.41", "(+256.35%)"]],
          [["Issued Warp Per Scheduler", "0.31", "(+256.35%)"], NONE],
        ]}></metric-table>
        <div class="rules"><rule-note .labels=${["Issue Slot Utilization", "Est. Local Speedup: 54.04%"]} labelWidth="190" h="92" .lines=${[
          [1180, "Every scheduler is capable of issuing one instruction per cycle, but for this kernel each scheduler only issues an instruction every 3.2 cycles. This might leave hardware resources underutilized and may lead to less optimal"],
          [1164, "performance. Out of the maximum of 8 warps per scheduler, this kernel allocates an average of 8.02 active warps per scheduler, but only an average of 0.36 warps were eligible per cycle. Eligible warps are the subset of"],
          [1180, "active warps that are ready to issue their next instruction. Every cycle with no eligible warp results in no instruction being issued and the issue slot remains unused. To increase the number of eligible warps, avoid possible"],
          [922, html`load imbalances due to highly different execution durations per warp. Reducing stalls indicated on the ${link("Warp State Statistics")} and ${link("Source Counters")} sections can help, too.`]]}></rule-note></div>
        ${barChart({ y0: 2394, h: 274, title: "Warps Per Scheduler", titleY: 2403.5, left: 234.6, right: 1488, top: 2419.3, bottom: 2642, max: 16,
          ticks: ["0.0", "4.0", "8.0", "12.0", "16.0"], tickY: [2653.7], off: 10.9, bar: 11.5,
          data: [["GPU Maximum Warps Per Scheduler", 8, 8], ["Theoretical Warps Per Scheduler", 8, 8], ["Active Warps Per Scheduler", 8.02, 2], ["Eligible Warps Per Scheduler", 0.36, 0.09], ["Issued Warp Per Scheduler", 0.31, 0.09]] })}
      </section>

      <section class="flush"><section-bar name="Warp State Statistics" open></section-bar>
        ${desc([[1477, "Analysis of the states in which all warps spent cycles during the kernel execution. The warp states describe a warp's readiness or inability to issue its next instruction. The warp cycles per instruction define the latency between two consecutive instructions. The higher the value,"],
          [1461, "the more warp parallelism is required to hide this latency. For each warp state, the chart shows the average number of cycles spent in that state per issued instruction. Stalls are not always impacting the overall performance nor are they completely avoidable. Only focus on"],
          [828, "stall reasons if the schedulers fail to issue every cycle. When executing a kernel with mixed library and user code, these metrics show the combined values."]])}
        <metric-table .pct=${[61, 54]} .rows=${[
          [["Warp Cycles Per Issued Instruction [cycle]", "25.53", "(+12.51%)"], ["Avg. Active Threads Per Warp", "31.75", "(+3.36%)"]],
          [["Warp Cycles Per Executed Instruction [cycle]", "25.53", "(+12.51%)"], ["Avg. Not Predicated Off Threads Per Warp", "31.29", "(+3.40%)"]],
        ]}></metric-table>
        <div class="rules">
          <rule-note .labels=${["Wait Stalls", "Est. Speedup: 54.04%"]} labelWidth="152" h="78" .lines=${[
            [1188, "On average, each warp of this kernel spends 14.1 cycles being stalled waiting on a fixed latency execution dependency. Typically, this stall reason should be very low and only shows up as a top contributor in already highly"],
            [1190, "optimized kernels. Try to hide the corresponding instruction latencies by increasing the number of active warps, restructuring the code or unrolling loops. Furthermore, consider switching to lower-latency instructions, e.g. by"],
            [806, "making use of fast math compiler options. This stall type represents about 55.4% of the total average of 25.5 cycles between issuing two instructions."]]}></rule-note>
          <rule-note kind="info" .labels=${["Warp Stall"]} labelWidth="82" h="40" .lines=${[
            [1028, html`Check the ${link("Warp Stall Sampling (All Samples)")} table for the top stall locations in your source based on sampling data. The ${web("Kernel Profiling Guide")} provides more details on each stall reason.`]]}></rule-note>
        </div>
        ${barChart({ y0: 2908, h: 834, title: "Warp State (All Cycles)", titleY: 2917.5, left: 189, right: 1488, top: 2953.7, bottom: 3696, max: 15,
          ticks: ["0.0", "5.0", "10.0", "15.0"], tickY: [2941.7, 3707.8], off: 10.7, bar: 10.3,
          data: [["Stall Wait", 14.14, 13.67], ["Stall Barrier", 7.165, 7.2], ["Stall Long Scoreboard", 1.29, 0.375], ["Selected", 1, 1], ["Stall MIO Throttle", 0.487, 0],
            ["Stall Math Pipe Throttle", 0.448, 0.002], ["Stall Branch Resolving", 0.387, 0.336], ["Stall Short Scoreboard", 0.258, 0.073], ["Stall Not Selected", 0.146, 0.002],
            ["Stall Dispatch Stall", 0.028, 0.002], ["Stall No Instruction", 0.002, 0.002], ["Stall LG Throttle", 0.002, 0], ["Stall Membar", 0.002, 0.002], ["Stall IMC Miss", 0.002, 0.002],
            ["Stall Drain", 0.002, 0.002], ["Stall Misc", 0, 0], ["Stall Sleeping", 0, 0], ["Stall Tex Throttle", 0, 0]],
          xTitle: ["Cycles per Instruction", 3727], yTitle: ["Warp States", 40.5, 3326] })}
      </section>

      <section class="flush"><section-bar name="Instruction Statistics"></section-bar>
        ${desc([[1466, "Statistics of the executed low-level assembly instructions (SASS). The instruction mix provides insight into the types and frequency of the executed instructions. A narrow mix of instruction types implies a dependency on few instruction pipelines, while others remain unused."],
          [1151, "Using multiple pipelines allows hiding latencies and enables parallel execution. Note that 'Instructions/Opcode' and 'Executed Instructions' are measured differently and can diverge if cycles are spent in system calls."]])}
        <metric-table .rows=${[
          [["Executed Instructions [inst]", "29,897,558,160", "(+65,165.22%)"], ["Avg. Executed Instructions Per Scheduler [inst]", "207,621,931.67", "(+65,165.22%)"]],
          [["Issued Instructions [inst]", "29,897,557,120", "(+65,165.21%)"], ["Avg. Issued Instructions Per Scheduler [inst]", "207,621,924.44", "(+65,165.21%)"]],
        ]}></metric-table>
        <div class="rules"><rule-note .labels=${["FP32 Non-Fused Instructions", "Est. Speedup: 2.22%"]} labelWidth="201" h="64" .lines=${[
          [1156, html`This kernel executes 163840 fused and 104890368 non-fused FP32 instructions. By converting pairs of non-fused instructions to their ${web("fused")}, higher-throughput equivalent, the achieved FP32 performance could be`],
          [749, "increased by up to 50% (relative to its current performance). Check the Source page to identify where this kernel executes FP32 instructions."]]}></rule-note></div></section>

      <section><section-bar name="NVLink Topology"></section-bar>${desc([[513, "NVLink Topology diagram shows logical NVLink connections with transmit/receive throughput."]], false)}</section>
      <section><section-bar name="NVLink Tables"></section-bar>${desc([[255, "Detailed tables with properties for each NVLink."]], false)}</section>
      <section><section-bar name="NUMA Affinity"></section-bar>${desc([[553, "Non-uniform memory access (NUMA) affinities based on compute and memory distances for all GPUs."]], false)}</section>

      <section><section-bar name="Launch Statistics"></section-bar>
        ${desc([[1427, "Summary of the configuration used to launch the kernel. The launch configuration defines the size of the kernel grid, the division of the grid into blocks, and the GPU resources needed to execute the kernel. Choosing an efficient launch configuration maximizes device"], [55, "utilization."]])}
        <metric-table .pct=${[91, 68]} .rows=${[
          [["Grid Size", "1,024", "(+102,300.00%)"], ["Function Cache Configuration", "CachePreferNone (CachePreferNone)", ""]],
          [["Registers Per Thread [register/thread]", "30", "(-3.23%)"], ["Static Shared Memory Per Block [Kbyte/block]", "4.10", "(+300.00%)"]],
          [["Block Size", "1,024", "(+300.00%)"], ["Dynamic Shared Memory Per Block [byte/block]", "0", "(+0.00%)"]],
          [["Threads [thread]", "1,048,576", "(+409,500.00%)"], ["Driver Shared Memory Per Block [byte/block]", "0", "(+0.00%)"]],
          [["Waves Per SM", "28.44", "(+409,500.00%)"], ["Shared Memory Configuration Size [Kbyte]", "32.77", "(+0.00%)"]],
          [["Uses Green Context", "0", "(+0.00%)"], ["# SMs [SM]", "36", "(+0.00%)"]],
        ]}></metric-table></section>

      <section><section-bar name="Occupancy"><div class="calc">${calcIcon}</div></section-bar>
        ${desc([[1469, "Occupancy is the ratio of the number of active warps per multiprocessor to the maximum number of possible active warps. Another way to view occupancy is the percentage of the hardware's ability to process warps that is actively in use. Higher occupancy does not always"],
          [1459, "result in higher performance, however, low occupancy always reduces the ability to hide latencies, resulting in overall performance degradation. Large discrepancies between the theoretical and the achieved occupancy during execution typically indicates highly imbalanced"], [58, "workloads."]])}
        <metric-table .pct=${[68, 57]} .rows=${[
          [["Theoretical Occupancy [%]", "100", "(+0.00%)"], ["Block Limit Registers [block]", "2", "(-75.00%)"]],
          [["Theoretical Active Warps per SM [warp]", "32", "(+0.00%)"], ["Block Limit Shared Mem [block]", "8", "(-75.00%)"]],
          [["Achieved Occupancy [%]", "99.37", "(+297.47%)"], ["Block Limit Warps [block]", "1", "(-75.00%)"]],
          [["Achieved Active Warps Per SM [warp]", "31.80", "(+297.47%)"], ["Block Limit SM [block]", "16", "(+0.00%)"]],
        ]}></metric-table></section>

      <section><section-bar name="GPU and Memory Workload Distribution"></section-bar>
        ${desc([[506, "Analysis of workload distribution in active cycles of SM, SMP, SMSP, L1 & L2 caches, and DRAM"]])}
        <metric-table .rows=${[
          [["Average SM Active Cycles [cycle]", "664,033,903.72", "(+18,299.12%)"], ["Average L1 Active Cycles [cycle]", "664,033,903.72", "(+18,299.12%)"]],
          [["Average L2 Active Cycles [cycle]", "166,759,036.09", "(+9,834.70%)"], ["Average SMSP Active Cycles [cycle]", "660,989,947.36", "(+18,214.94%)"]],
          [["Average DRAM Active Cycles [cycle]", "162,706,801", "(+11,502.29%)"], ["Total SM Elapsed Cycles [cycle]", "24,524,240,268", "(+424.31%)"]],
          [["Total L1 Elapsed Cycles [cycle]", "24,524,240,268", "(+424.31%)"], ["Total L2 Elapsed Cycles [cycle]", "21,099,311,904", "(+424.91%)"]],
          [["Total SMSP Elapsed Cycles [cycle]", "98,096,961,072", "(+424.31%)"], ["Total DRAM Elapsed Cycles [cycle]", "33,334,025,216", "(+425.21%)"]],
        ]}></metric-table></section>

      <section class="flush"><section-bar name="Source Counters"></section-bar>
        ${desc([[1460, "Source metrics, including branch efficiency and sampled warp stall reasons. Warp Stall Sampling metrics are periodically sampled over the kernel runtime. They indicate when warps were stalled and couldn't be scheduled. See the documentation for a description of all stall"],
          [374, "reasons. Only focus on stalls if the schedulers fail to issue every cycle."]])}
        <metric-table .rows=${[
          [["Branch Instructions [inst]", "2,835,611,648", "(+63,017.83%)"], ["Branch Efficiency [%]", "99.70", "(+1.20%)"]],
          [["Branch Instructions Ratio [%]", "0.09", "(-3.29%)"], ["Avg. Divergent Branches", "43,690.67", "(+12,700.00%)"]],
        ]}></metric-table>
        <div class="rules"><rule-note .labels=${["Uncoalesced Global Accesses", "Est. Speedup: 19.65%"]} labelWidth="203" h="64" .lines=${[
          [1156, "This kernel has uncoalesced global accesses resulting in a total of 939524096 excessive sectors (78% of the total 1209008128 sectors). Check the L2 Theoretical Sectors Global Excessive table for the primary source"],
          [665, html`locations. The ${web("CUDA Programming Guide")} has additional information on reducing uncoalesced device memory accesses.`]]}></rule-note></div>
        <div class="l2">L2 Theoretical Sectors Global Excessive</div>
        <div class="lt">
          <div class="lr head"><div>Location</div><div>Value</div><div>Value (%)</div></div>
          ${sources.map((s, i) => html`<div class="lr"><div><a>GpuSolver2.cu:${s} in gpuSolver2)</a>${openIcon}</div>
            ${i === 0 ? html`<div class="hot"><div class="fill">939,524,096</div></div><div class="hot"><div class="fill blue">100</div></div>` : html`<div>0</div><div>0</div>`}</div>`)}
        </div>
      </section>
      <footer>
        <div class="line" style="width:611px">To customize your report even further, you might want to learn about <a>custom sections</a> and <a>writing your own rules</a>.</div>
        <div class="line" style="width:317px">You might also want to consider <a>adding individual metrics</a>.</div>
      </footer>`;
  }
}
